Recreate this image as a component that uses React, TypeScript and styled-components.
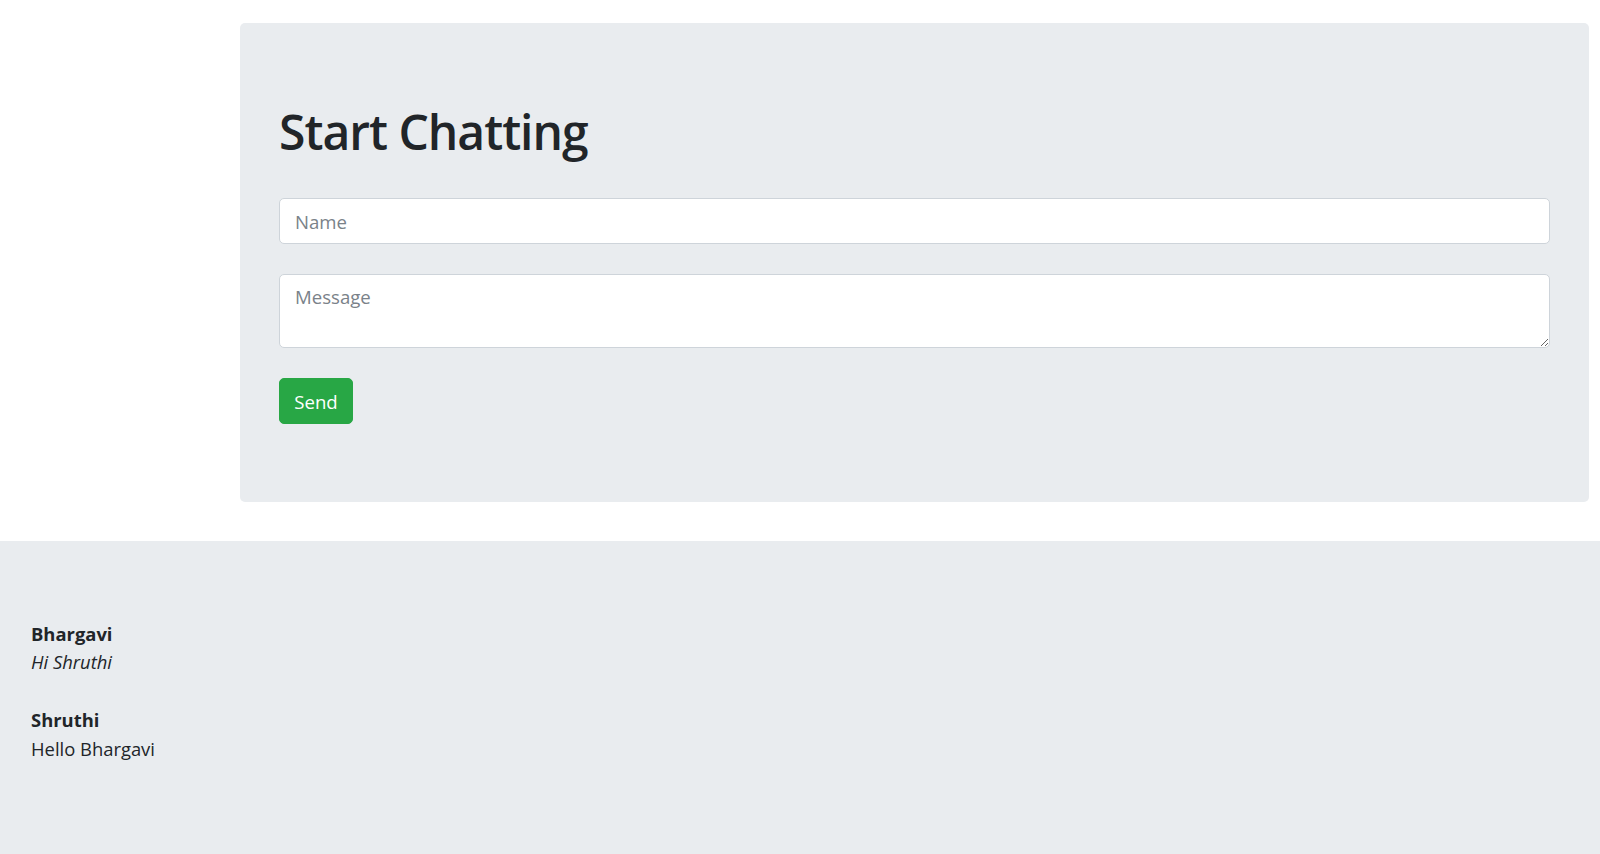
import React from "react";
import styled, { createGlobalStyle } from "styled-components";

const GlobalStyle = createGlobalStyle`
  html, body { margin: 0; padding: 0; background: #fff; }
  body {
    font-family: "Open Sans", "Noto Sans", sans-serif;
    font-size: 19.2px;
    line-height: 1.5;
    color: #212529;
  }
  * { box-sizing: border-box; }
`;

const Page = styled.div`
  min-height: 100vh;
  display: flex;
  flex-direction: column;
`;

const TopArea = styled.div`
  padding: 23px 11px 39px 240px;
`;

const Jumbotron = styled.section`
  background: #e9ecef;
  border-radius: 5px;
  padding: 77px 39px 78px 39px;
`;

const Title = styled.h1`
  margin: 0 0 37px 0;
  padding-top: 3px;
  font-size: 48px;
  font-weight: 600;
  letter-spacing: -1px;
  line-height: 1.2;
  color: #212529;
`;

const Form = styled.form`
  display: flex;
  flex-direction: column;
  align-items: flex-start;
`;

const FieldGroup = styled.div`
  width: 100%;
  margin-bottom: 30px;
`;

const fieldBase = `
  display: block;
  width: 100%;
  font-family: "Open Sans", "Noto Sans", sans-serif;
  font-size: 18.6px;
  line-height: 1.5;
  color: #495057;
  background: #fff;
  border: 1px solid #ced4da;
  border-radius: 5px;
  padding: 8px 15px 6px 15px;
  outline: none;
  &::placeholder { color: #7a8289; opacity: 1; }
`;

const TextInput = styled.input`
  ${fieldBase}
  height: 46px;
`;

const TextArea = styled.textarea`
  ${fieldBase}
  height: 74px;
  resize: vertical;
`;

const SendButton = styled.button`
  font-family: "Open Sans", "Noto Sans", sans-serif;
  font-size: 18.6px;
  line-height: 1.5;
  color: #fff;
  background: #28a745;
  border: 1px solid #28a745;
  border-radius: 5px;
  height: 46px;
  width: 74px;
  padding: 2px 0 0 0;
  cursor: pointer;
`;

const MessagesArea = styled.section`
  flex: 1;
  background: #e9ecef;
  padding: 79px 31px 40px 31px;
  font-size: 18.4px;
  line-height: 28.8px;
`;

const MessageItem = styled.div`
  margin-bottom: 28.8px;
`;

const Author = styled.div`
  font-weight: 700;
`;

const Body = styled.div<{ $italic?: boolean }>`
  font-style: ${(p) => (p.$italic ? "italic" : "normal")};
`;

const messages = [
  { name: "Bhargavi", text: "Hi Shruthi", italic: true },
  { name: "Shruthi", text: "Hello Bhargavi", italic: false },
];

export default function App() {
  return (
    <Page>
      <GlobalStyle />
      <TopArea>
        <Jumbotron>
          <Title>Start Chatting</Title>
          <Form onSubmit={(e) => e.preventDefault()}>
            <FieldGroup>
              <TextInput type="text" placeholder="Name" />
            </FieldGroup>
            <FieldGroup>
              <TextArea placeholder="Message" />
            </FieldGroup>
            <SendButton type="submit">Send</SendButton>
          </Form>
        </Jumbotron>
      </TopArea>
      <MessagesArea>
        {messages.map((m) => (
          <MessageItem key={m.name}>
            <Author>{m.name}</Author>
            <Body $italic={m.italic}>{m.text}</Body>
          </MessageItem>
        ))}
      </MessagesArea>
    </Page>
  );
}
